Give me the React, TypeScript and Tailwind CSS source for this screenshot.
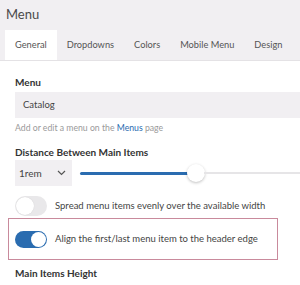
import React from 'react';

const tabs = ['General', 'Dropdowns', 'Colors', 'Mobile Menu', 'Design'];

function Toggle({ on }: { on: boolean }) {
  return on ? (
    <div className="w-[32px] h-[17px] rounded-full bg-[#2a6cb0] flex items-center justify-end pr-[1px] shrink-0">
      <div className="w-[15px] h-[15px] rounded-full bg-white" />
    </div>
  ) : (
    <div className="w-[32px] h-[20px] rounded-full bg-[#e9e8ea] flex items-center pl-[1px] shrink-0">
      <div className="w-[18px] h-[18px] rounded-full bg-white shadow-[0_0_1px_rgba(0,0,0,0.15)]" />
    </div>
  );
}

export default function App() {
  return (
    <div className="w-[300px] h-[285px] overflow-hidden bg-white text-[#3a3a3a]" style={{ fontFamily: 'Lato, "Open Sans", sans-serif' }}>
      {/* header + tabs */}
      <div className="bg-[#f1eff2] border-b border-[#e4e2e5]">
        <div className="h-[30px] pl-[6px] pt-[3px] text-[13px] leading-[22px] text-[#4a4a4a]">Menu</div>
        <div className="flex pl-[5px] h-[30px]">
          {tabs.map((t, i) => (
            <div
              key={t}
              className={`px-[10px] text-[9.25px] flex items-center whitespace-nowrap text-[#555] ${i === 0 ? 'bg-white' : ''}`}
            >
              {t}
            </div>
          ))}
        </div>
      </div>

      <div className="pl-[15px] pt-[13px]">
        <div className="text-[10px] font-bold leading-[16px] text-[#333]">Menu</div>
        <div className="mt-[2px] h-[26px] w-[300px] bg-[#f1eff2] flex items-center pl-[8px] text-[9.5px] text-[#444]">Catalog</div>
        <div className="mt-[3px] text-[8.7px] leading-[14px] text-[#9a9a9a] whitespace-nowrap">
          Add or edit a menu on the <span className="text-[#2a6cb0]">Menus</span> page
        </div>
        <div className="mt-[9px] text-[10px] font-bold leading-[16px] text-[#333]">Distance Between Main Items</div>
        <div className="flex items-center">
          <div className="w-[57px] h-[26px] bg-[#f1eff2] flex items-center justify-between pl-[4px] pr-[6px] text-[10px] text-[#444]">
            <span>1rem</span>
            <svg width="9" height="6" viewBox="0 0 9 6" fill="none" stroke="#555" strokeWidth="1.2">
              <path d="M1 1l3.5 3.5L8 1" />
            </svg>
          </div>
          <div className="ml-[8px] flex-1 flex items-center">
            <div className="w-[108px] h-[3px] bg-[#2a6cb0] rounded-l-full" />
            <div className="w-[18px] h-[18px] rounded-full bg-white shadow-[0_1px_3px_rgba(0,0,0,0.25)] -mx-[1px] shrink-0" />
            <div className="flex-1 h-[2px] bg-[#e6e5e7]" />
          </div>
        </div>
        <div className="mt-[10px] flex items-center gap-[8px] h-[20px]">
          <Toggle on={false} />
          <span className="text-[9.5px] text-[#444] whitespace-nowrap">Spread menu items evenly over the available width</span>
        </div>
      </div>

      <div className="ml-[8px] mt-[2px] w-[270px] h-[42px] border border-[#c98a9c] flex items-center pl-[6px] gap-[8px]">
        <Toggle on={true} />
        <span className="text-[9.5px] text-[#444] whitespace-nowrap">Align the first/last menu item to the header edge</span>
      </div>

      <div className="pl-[15px] mt-[5px] text-[10px] font-bold leading-[16px] text-[#333]">Main Items Height</div>
    </div>
  );
}
